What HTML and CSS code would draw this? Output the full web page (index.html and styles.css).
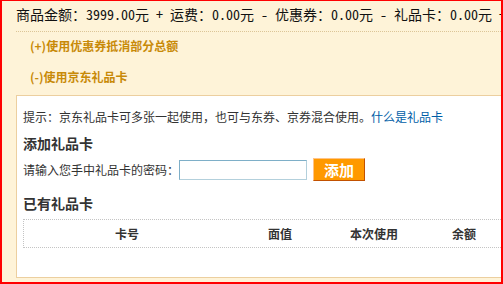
FILE: index.html
```html
<!DOCTYPE HTML>
<html>
<head>
<meta charset="utf-8">
<link rel="stylesheet" href="styles.css">
</head>
<body>
<div class="frame">
    <div class="summary">商品金额：3999.00元 + 运费：0.00元 - 优惠券：0.00元 - 礼品卡：0.00元 +</div>
    <div class="toggle">(+)使用优惠券抵消部分总额</div>
    <div class="toggle">(-)使用京东礼品卡</div>
    <div class="panel">
        <p class="tip">提示：京东礼品卡可多张一起使用，也可与东券、京券混合使用。<a href="#">什么是礼品卡</a></p>
        <h3>添加礼品卡</h3>
        <div class="add-row">
            <label>请输入您手中礼品卡的密码：</label>
            <input type="text" class="code">
            <button class="btn-add">添加</button>
        </div>
        <h3 class="owned">已有礼品卡</h3>
        <div class="cards">
            <span>卡号</span>
            <span>面值</span>
            <span>本次使用</span>
            <span>余额</span>
        </div>
    </div>
</div>
</body>
</html>
```
FILE: styles.css
```css
html, body {
    margin: 0;
    padding: 0;
}
body {
    font-family: "Noto Sans CJK SC", "DejaVu Sans", sans-serif;
    font-size: 12px;
    color: #333;
}
.frame {
    box-sizing: border-box;
    width: 503px;
    height: 284px;
    overflow: hidden;
    background: #fef3d8;
    border: 2px solid #ff0000;
    border-top-width: 1px;
}
.summary {
    margin-left: 14px;
    padding-bottom: 3px;
    line-height: 27px;
    font-size: 14px;
    color: #111;
    white-space: nowrap;
    border-bottom: 1px dotted #dcc597;
    font-feature-settings: "hwid";
}
.toggle {
    padding-left: 28px;
    line-height: 28px;
    margin-bottom: 3px;
    font-weight: bold;
    color: #c88a08;
}
.panel {
    margin: 4px 0 0 14px;
    width: 520px;
    height: 181px;
    background: #fff;
    border: 1px solid #eccf9f;
    padding: 0 6px;
}
.tip {
    margin: 12px 0 0;
    line-height: 18px;
    white-space: nowrap;
}
.tip a {
    color: #005ea7;
    text-decoration: none;
}
h3 {
    margin: 7px 0 0;
    font-size: 14px;
    line-height: 20px;
    color: #333;
}
.add-row {
    margin-top: 5px;
    display: flex;
    align-items: center;
    height: 23px;
}
.code {
    box-sizing: border-box;
    width: 128px;
    height: 20px;
    margin: 0;
    padding: 0 3px;
    border: 1px solid #b3d0dc;
    border-top-color: #7eafc8;
    border-left-color: #7eafc8;
    outline: none;
}
.btn-add {
    box-sizing: border-box;
    margin-left: 6px;
    width: 52px;
    height: 23px;
    padding: 0;
    background: #ff9900;
    border: 1px solid #c25100;
    border-top-color: #ffc487;
    border-left-color: #ffc487;
    color: #fff;
    font-family: inherit;
    font-size: 15px;
    font-weight: bold;
}
h3.owned {
    margin-top: 12px;
}
.cards {
    margin-top: 6px;
    display: grid;
    grid-template-columns: 206px 100px 88px 92px 60px;
    height: 27px;
    line-height: 27px;
    border: 1px dotted #c4c4c4;
    font-weight: bold;
    color: #333;
}
.cards span {
    text-align: center;
}
```
